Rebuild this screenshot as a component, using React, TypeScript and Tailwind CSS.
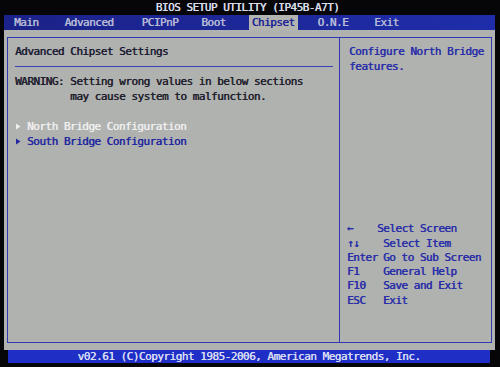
const MENU = [
  { label: 'Main', className: 'ml-[7px]' },
  { label: 'Advanced', className: 'ml-[20px]' },
  { label: 'PCIPnP', className: 'ml-[22px]' },
  { label: 'Boot', className: 'ml-[17px]' },
  { label: 'Chipset', className: 'ml-[20px]', active: true },
  { label: 'O.N.E', className: 'ml-[17px]' },
  { label: 'Exit', className: 'ml-[20px]' },
]

const HELP = [
  { key: '←', desc: 'Select Screen', descClass: 'ml-[-6px]' },
  { key: '↑↓', desc: 'Select Item', descClass: '' },
  { key: 'Enter', desc: 'Go to Sub Screen', descClass: '' },
  { key: 'F1', desc: 'General Help', descClass: '' },
  { key: 'F10', desc: 'Save and Exit', descClass: '' },
  { key: 'ESC', desc: 'Exit', descClass: '' },
]

function Arrow({ color }: { color: string }) {
  return (
    <span className="inline-flex w-[12px] items-center">
      <svg width="6" height="7" viewBox="0 0 6 7">
        <path d="M1 0.5 L5.5 3.5 L1 6.5 Z" fill={color} />
      </svg>
    </span>
  )
}

export default function App() {
  return (
    <div className="h-[367px] w-[500px] overflow-hidden bg-[#060609] font-['DejaVu_Sans_Mono','Liberation_Mono',monospace] text-[11px] leading-[15px] tracking-[-0.5px] [text-shadow:0.4px_0_0_currentColor]">
      <div className="flex h-[15px] items-center justify-center pr-[5px] text-[#dadde8]">
        BIOS SETUP UTILITY (IP45B-A7T)
      </div>

      <div className="ml-[4px] mr-[5px] flex h-[15px] items-center bg-linear-to-r from-[#1b2288] to-[#1f2daa] text-[#b6bad6]">
        {MENU.map((item) => (
          <span
            key={item.label}
            className={`${item.className} px-[3px] ${
              item.active ? 'bg-[#b3b4b0] text-[#1e2596]' : ''
            }`}
          >
            {item.label}
          </span>
        ))}
      </div>

      <div className="ml-[4px] mr-[5px] h-[320px] bg-[#b0b2b0] pb-[7px] pl-[3px] pr-[3px] pt-[7px]">
        <div className="flex h-[306px] border border-[#3038b4]">
          <div className="w-[332px] border-r border-[#3038b4] pl-[7px] pr-[6px] pt-[6px]">
            <div className="text-[#1c1c34]">Advanced Chipset Settings</div>
            <div className="mt-[7px] h-px bg-[#3a40b8]" />
            <div className="mt-[7px] whitespace-pre text-[#20202c]">
              {'WARNING: Setting wrong values in below sections\n         may cause system to malfunction.'}
            </div>
            <div className="mt-[15px] flex items-center text-[#eeeeee]">
              <Arrow color="#eeeeee" />
              North Bridge Configuration
            </div>
            <div className="flex items-center text-[#2428a0]">
              <Arrow color="#2428a0" />
              South Bridge Configuration
            </div>
          </div>

          <div className="flex flex-1 flex-col pl-[9px] pt-[6px] text-[#2a2ea8]">
            <div>
              Configure North Bridge
              <br />
              features.
            </div>
            <div className="ml-[-2px] mt-auto pb-[34px] leading-[14.3px]">
              {HELP.map((row) => (
                <div key={row.key} className="flex">
                  <span className="w-[36px]">{row.key}</span>
                  <span className={row.descClass}>{row.desc}</span>
                </div>
              ))}
            </div>
          </div>
        </div>
      </div>

      <div className="ml-[8px] mr-[10px] flex h-[13px] items-center justify-center bg-[#1f2fc6] text-[#d8dcf4]">
        v02.61 (C)Copyright 1985-2006, American Megatrends, Inc.
      </div>
    </div>
  )
}
